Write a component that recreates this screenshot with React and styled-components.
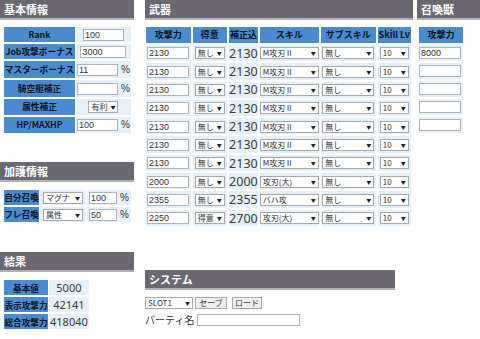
import React from "react";
import styled, { createGlobalStyle } from "styled-components";

const Global = createGlobalStyle`
  html, body { margin: 0; padding: 0; background: #fff; }
  body { font-family: "Noto Sans CJK JP", "Noto Sans", sans-serif; color: #222; }
`;

const Page = styled.div`
  display: flex;
  align-items: flex-start;
  width: 480px;
  height: 339px;
  overflow: hidden;
`;

const Column = styled.div`
  display: flex;
  flex-direction: column;
  flex: none;
  width: ${(p) => p.$w}px;
  margin-left: ${(p) => p.$ml || 0}px;
`;

const Section = styled.section`
  display: flex;
  flex-direction: column;
  margin-top: ${(p) => p.$mt || 0}px;
`;

const Head = styled.div`
  height: 18px;
  width: ${(p) => (p.$w ? `${p.$w}px` : "auto")};
  background: #6c6872;
  border-bottom: 2px solid #b3b0b7;
  color: #fff;
  font-weight: bold;
  font-size: 11px;
  line-height: 18px;
  padding-left: 4px;
  box-sizing: content-box;
  white-space: nowrap;
`;

const Table = styled.table`
  align-self: flex-start;
  border-collapse: separate;
  border-spacing: ${(p) => p.$sp || "1px 2px"};
  table-layout: fixed;
  margin: ${(p) => p.$m || "4px 0 0 3px"};
  font-size: 9px;
  line-height: 12px;
`;

const Label = styled.th`
  background: #4a8bd0;
  color: #0c1424;
  font-weight: bold;
  font-size: ${(p) => p.$fs || 9}px;
  line-height: 12px;
  height: ${(p) => p.$h || 15}px;
  padding: 0;
  text-align: center;
  white-space: nowrap;
  overflow: hidden;
  width: ${(p) => (p.$w ? `${p.$w}px` : "auto")};
`;

const Cell = styled.td`
  background: #e5f0f9;
  height: ${(p) => p.$h || 15}px;
  padding: 0 ${(p) => p.$px ?? 1}px;
  text-align: ${(p) => p.$align || "center"};
  white-space: nowrap;
  width: ${(p) => (p.$w ? `${p.$w}px` : "auto")};
  vertical-align: middle;
  font-size: 9px;
  line-height: 12px;
  overflow: visible;
`;

const Num = styled.span`
  font-family: "Noto Sans", "Open Sans", sans-serif;
  font-size: ${(p) => p.$fs || 12.5}px;
  color: #3a3a3a;
  line-height: 12px;
  vertical-align: middle;
`;

const Inp = styled.input`
  width: ${(p) => p.$w}px;
  height: 12px;
  box-sizing: border-box;
  border: 1px solid #aeb3ba;
  background: #fff;
  font-family: "Liberation Sans", Arial, sans-serif;
  font-size: 9px;
  color: #333;
  padding: 0 1px;
  margin: 0;
  vertical-align: middle;
  outline: none;
`;

const Pct = styled.span`
  font-family: "Liberation Sans", Arial, sans-serif;
  font-size: 10px;
  color: #333;
  margin-left: 3px;
  vertical-align: middle;
`;

const SelWrap = styled.span`
  position: relative;
  display: inline-block;
  width: ${(p) => p.$w}px;
  height: 12px;
  line-height: 0;
  vertical-align: middle;
`;

const Sel = styled.select`
  appearance: none;
  -webkit-appearance: none;
  display: block;
  width: 100%;
  height: 12px;
  box-sizing: border-box;
  border: 1px solid #a8a8a8;
  border-radius: 0;
  background: #fff;
  font-family: "Noto Sans CJK JP", sans-serif;
  font-size: 8px;
  line-height: 10px;
  color: #333;
  padding: 0 0 0 2px;
  margin: 0;
  outline: none;
`;

const Arrow = styled.span`
  position: absolute;
  right: 3px;
  top: 3px;
  font-size: 5px;
  line-height: 6px;
  color: #222;
  pointer-events: none;
`;

const Btn = styled.button`
  height: 12px;
  width: ${(p) => p.$w}px;
  box-sizing: border-box;
  border: 1px solid #a8a8a8;
  background: #f0f0f0;
  font-family: "Noto Sans CJK JP", sans-serif;
  font-size: 8px;
  color: #333;
  padding: 0;
  margin: 0 0 0 ${(p) => p.$ml || 0}px;
  line-height: 10px;
`;

const Row = styled.div`
  display: flex;
  align-items: center;
  margin-top: ${(p) => p.$mt || 0}px;
`;

const Text = styled.span`
  font-size: 10px;
  color: #333;
  margin-right: 3px;
  line-height: 1;
`;

const GhostBox = styled.div`
  width: 40px;
  height: 10px;
  border: 1px solid #ccc;
  border-bottom: none;
  margin-top: 14px;
`;

function Select({ w, value }) {
  return (
    <SelWrap $w={w}>
      <Sel defaultValue={value}>
        <option>{value}</option>
      </Sel>
      <Arrow>▼</Arrow>
    </SelWrap>
  );
}

const weapons = [
  ...Array.from({ length: 7 }, () => [2130, "無し", 2130, "M攻刃Ⅱ"]),
  [2000, "無し", 2000, "攻刃(大)"],
  [2355, "無し", 2355, "バハ攻"],
  [2250, "得意", 2700, "攻刃(大)"],
];

const summons = ["8000", "", "", "", ""];

export default function App() {
  return (
    <>
      <Global />
      <Page>
        <Column $w={134}>
          <Section>
            <Head>基本情報</Head>
            <Table $m="5px 0 0 3px">
              <tbody>
                <tr>
                  <Label $w={71} $h={15} $fs={8.7}>Rank</Label>
                  <Cell $w={51} $h={15}><Inp $w={41} defaultValue="100" /></Cell>
                </tr>
                <tr>
                  <Label $h={15} $fs={8.7}>Job攻撃ボーナス</Label>
                  <Cell $h={15}><Inp $w={46} defaultValue="3000" /></Cell>
                </tr>
                <tr>
                  <Label $h={17} $fs={8.7}>マスターボーナス</Label>
                  <Cell $h={17}><Inp $w={41} defaultValue="11" /><Pct>%</Pct></Cell>
                </tr>
                <tr>
                  <Label $h={17} $fs={8.7}>騎空艇補正</Label>
                  <Cell $h={17}><Inp $w={41} defaultValue="" /><Pct>%</Pct></Cell>
                </tr>
                <tr>
                  <Label $h={16} $fs={8.7}>属性補正</Label>
                  <Cell $h={16}><Select w={30} value="有利" /></Cell>
                </tr>
                <tr>
                  <Label $h={16} $fs={8.7}>HP/MAXHP</Label>
                  <Cell $h={16}><Inp $w={41} defaultValue="100" /><Pct>%</Pct></Cell>
                </tr>
              </tbody>
            </Table>
          </Section>

          <Section $mt={27}>
            <Head>加護情報</Head>
            <Table $m="6px 0 0 3px">
              <tbody>
                <tr>
                  <Label $w={35} $h={15} $fs={8.7}>自分召喚</Label>
                  <Cell $w={44} $h={15}><Select w={40} value="マグナ" /></Cell>
                  <Cell $w={37} $h={15} $align="left" $px={2}><Inp $w={28} defaultValue="100" /><Pct>%</Pct></Cell>
                </tr>
                <tr>
                  <Label $h={15} $fs={8.7}>フレ召喚</Label>
                  <Cell $h={15}><Select w={40} value="属性" /></Cell>
                  <Cell $h={15} $align="left" $px={2}><Inp $w={28} defaultValue="50" /><Pct>%</Pct></Cell>
                </tr>
              </tbody>
            </Table>
          </Section>

          <Section $mt={28}>
            <Head>結果</Head>
            <Table $m="6px 0 0 3px">
              <tbody>
                <tr>
                  <Label $w={44} $h={15} $fs={8.6}>基本値</Label>
                  <Cell $w={36} $h={15}><Num $fs={11}>5000</Num></Cell>
                </tr>
                <tr>
                  <Label $h={15} $fs={8.6}>表示攻撃力</Label>
                  <Cell $h={15}><Num $fs={11}>42141</Num></Cell>
                </tr>
                <tr>
                  <Label $h={15} $fs={8.6}>総合攻撃力</Label>
                  <Cell $h={15}><Num $fs={11}>418040</Num></Cell>
                </tr>
              </tbody>
            </Table>
          </Section>
        </Column>

        <Column $w={268} $ml={11}>
          <Section>
            <Head>武器</Head>
            <Table $m="5px 0 0 -1px" $sp="2px 2px">
              <thead>
                <tr>
                  <Label $w={45} $h={16}>攻撃力</Label>
                  <Label $w={35} $h={16}>得意</Label>
                  <Label $w={29} $h={16}>補正込</Label>
                  <Label $w={58} $h={16}>スキル</Label>
                  <Label $w={55} $h={16}>サブスキル</Label>
                  <Label $w={34} $h={16}>Skill Lv</Label>
                </tr>
              </thead>
              <tbody>
                {weapons.map((w, i) => (
                  <tr key={i}>
                    <Cell $h={16.3} $align="left" $px={1}><Inp $w={42} defaultValue={w[0]} /></Cell>
                    <Cell $h={16.3}><Select w={30} value={w[1]} /></Cell>
                    <Cell $h={16.3} $px={0}><Num>{w[2]}</Num></Cell>
                    <Cell $h={16.3} $align="left" $px={0}><Select w={59} value={w[3]} /></Cell>
                    <Cell $h={16.3}><Select w={52} value="無し" /></Cell>
                    <Cell $h={16.3}><Select w={29} value="10" /></Cell>
                  </tr>
                ))}
              </tbody>
            </Table>
          </Section>

          <Section $mt={42}>
            <Head $w={246}>システム</Head>
            <Row $mt={7}>
              <Select w={48} value="SLOT1" />
              <Btn $w={32} $ml={2}>セーブ</Btn>
              <Btn $w={30} $ml={5}>ロード</Btn>
            </Row>
            <Row $mt={5}>
              <Text>パーティ名</Text>
              <Inp $w={103} defaultValue="" />
            </Row>
            <GhostBox />
          </Section>
        </Column>

        <Column $w={63} $ml={4}>
          <Section>
            <Head>召喚獣</Head>
            <Table $m="5px 0 0 0" $sp="2px 2px">
              <thead>
                <tr>
                  <Label $w={44} $h={16}>攻撃力</Label>
                </tr>
              </thead>
              <tbody>
                {summons.map((s, i) => (
                  <tr key={i}>
                    <Cell $h={16} $align="left" $px={0}><Inp $w={42} defaultValue={s} /></Cell>
                  </tr>
                ))}
              </tbody>
            </Table>
          </Section>
        </Column>
      </Page>
    </>
  );
}
